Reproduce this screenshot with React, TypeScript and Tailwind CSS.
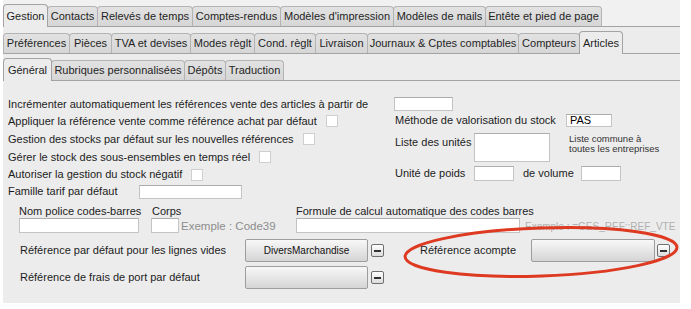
import React from 'react'

type Tab = { label: string; w: number; active?: boolean }

const row1: Tab[] = [
  { label: 'Gestion', w: 45, active: true },
  { label: 'Contacts', w: 51 },
  { label: 'Relevés de temps', w: 96 },
  { label: 'Comptes-rendus', w: 89 },
  { label: "Modèles d'impression", w: 114 },
  { label: 'Modèles de mails', w: 93 },
  { label: 'Entête et pied de page', w: 117 },
]

const row2: Tab[] = [
  { label: 'Préférences', w: 67 },
  { label: 'Pièces', w: 43 },
  { label: 'TVA et devises', w: 80 },
  { label: 'Modes règlt', w: 65 },
  { label: 'Cond. règlt', w: 62 },
  { label: 'Livraison', w: 53 },
  { label: 'Journaux & Cptes comptables', w: 152 },
  { label: 'Compteurs', w: 62 },
  { label: 'Articles', w: 44, active: true },
]

const row3: Tab[] = [
  { label: 'Général', w: 49, active: true },
  { label: 'Rubriques personnalisées', w: 134 },
  { label: 'Dépôts', w: 42 },
  { label: 'Traduction', w: 59 },
]

function TabRow({ tabs, className = '' }: { tabs: Tab[]; className?: string }) {
  return (
    <div className={`flex items-end h-[22px] border-b border-[#a3a3a3] ${className}`}>
      {tabs.map((t, i) => (
        <div
          key={t.label}
          style={{ width: t.w }}
          className={
            t.active
              ? `relative z-10 -mb-px h-[23px] flex items-center justify-center rounded-t-[4px] border border-b-0 border-[#a3a3a3] bg-[#ececec] ${i > 0 ? '-ml-px' : ''}`
              : `h-[20px] flex items-center justify-center rounded-t-[4px] border border-b-0 border-[#b3b3b3] bg-gradient-to-b from-[#e2e2e2] to-[#d6d6d6] ${i > 0 ? '-ml-px' : ''}`
          }
        >
          <span className="whitespace-nowrap text-[#1f1f1f]">{t.label}</span>
        </div>
      ))}
    </div>
  )
}

function Field({ w, h = 14, value }: { w: number; h?: number; value?: string }) {
  return (
    <div
      style={{ width: w, height: h }}
      className="shrink-0 bg-white border border-[#c4c4c4] border-t-[#adadad] px-[3px] flex items-center text-[11px] text-black"
    >
      {value}
    </div>
  )
}

function Check() {
  return <div className="shrink-0 ml-[9px] w-[12px] h-[12px] bg-white border border-[#cfcfcf]" />
}

function Minus() {
  return (
    <div className="shrink-0 w-[13px] h-[13px] rounded-[2px] border border-[#6f6f6f] bg-gradient-to-b from-white to-[#dcdcdc] flex items-center justify-center">
      <div className="w-[7px] h-[2px] bg-[#333]" />
    </div>
  )
}

function RefButton({ w, label }: { w: number; label?: string }) {
  return (
    <div
      style={{ width: w }}
      className="shrink-0 h-[23px] rounded-[2px] border border-[#9d9d9d] bg-gradient-to-b from-[#f8f8f8] to-[#d5d5d5] flex items-center justify-center text-[10px] text-[#111]"
    >
      {label}
    </div>
  )
}

export default function App() {
  return (
    <div className="relative w-[691px] h-[309px] bg-white overflow-hidden font-[Liberation_Sans,Arial,sans-serif] text-[11px] text-[#1c1c1c]">
      <div className="ml-[3px] w-[677px] bg-[#ececec] pt-[5px]">
        <TabRow tabs={row1} className="bg-[#f1f1f1] -mt-[5px] pt-[5px] h-[27px]" />
        <TabRow tabs={row2} className="mt-[5px]" />
        <TabRow tabs={row3} className="mt-[5px]" />

        <div className="h-[222px] pl-[5px] pt-[16px]">
          {/* auto increment */}
          <div className="flex items-center h-[14px]">
            <span className="w-[386px] whitespace-nowrap">
              Incrémenter automatiquement les références vente des articles à partir de
            </span>
            <Field w={59} />
          </div>

          <div className="flex">
            {/* left column */}
            <div className="w-[387px] pt-[1px]">
              <div className="flex items-center h-[18px]">
                <span>Appliquer la référence vente comme référence achat par défaut</span>
                <Check />
              </div>
              <div className="flex items-center h-[18px]">
                <span>Gestion des stocks par défaut sur les nouvelles références</span>
                <Check />
              </div>
              <div className="flex items-center h-[18px]">
                <span>Gérer le stock des sous-ensembles en temps réel</span>
                <Check />
              </div>
              <div className="flex items-center h-[17px]">
                <span>Autoriser la gestion du stock négatif</span>
                <Check />
              </div>
              <div className="flex items-center h-[17px]">
                <span className="w-[131px]">Famille tarif par défaut</span>
                <Field w={103} />
              </div>
            </div>

            {/* right column */}
            <div className="pt-[3px]">
              <div className="flex items-center h-[13px]">
                <span className="w-[171px]">Méthode de valorisation du stock</span>
                <Field w={46} h={13} value="PAS" />
              </div>
              <div className="flex items-start mt-[6px] h-[29px]">
                <span className="w-[79px] mt-[1px]">Liste des unités</span>
                <Field w={76} h={29} />
                <div className="ml-[19px] mt-[1px] text-[9.5px] leading-[10px] text-[#333]">
                  Liste commune à
                  <br />
                  toutes les entreprises
                </div>
              </div>
              <div className="flex items-center mt-[4px] h-[15px]">
                <span className="w-[79px]">Unité de poids</span>
                <Field w={40} h={15} />
                <span className="ml-[9px] w-[58px]">de volume</span>
                <Field w={40} h={15} />
              </div>
            </div>
          </div>

          {/* barcode */}
          <div className="flex ml-[11px] mt-[4px]">
            <div className="w-[132px]">
              <div className="h-[14px] leading-[14px]">Nom police codes-barres</div>
              <Field w={120} h={15} />
            </div>
            <div className="w-[145px]">
              <div className="h-[14px] leading-[14px] ml-[1px]">Corps</div>
              <div className="flex items-end">
                <Field w={28} h={15} />
                <span className="ml-[2px] text-[11.5px] leading-[13px] text-[#8c8c8c]">Exemple : Code39</span>
              </div>
            </div>
            <div>
              <div className="h-[14px] leading-[14px]">Formule de calcul automatique des codes barres</div>
              <div className="flex items-start">
                <Field w={224} h={15} />
                <div className="ml-[5px] mt-[3px] text-[10px] leading-[11px] text-[#b0b0b0] whitespace-nowrap">
                  Exemple : =GES_REF::REF_VTE
                </div>
              </div>
            </div>
          </div>

          {/* reference rows */}
          <div className="flex items-center ml-[12px] mt-[6px] h-[23px]">
            <span className="w-[225px]">Référence par défaut pour les lignes vides</span>
            <RefButton w={123} label="DiversMarchandise" />
            <div className="ml-[3px]">
              <Minus />
            </div>
            <span className="ml-[36px] w-[111px]">Référence acompte</span>
            <RefButton w={124} />
            <div className="ml-[2px]">
              <Minus />
            </div>
          </div>
          <div className="flex items-center ml-[12px] mt-[4px] h-[23px]">
            <span className="w-[225px]">Référence de frais de port par défaut</span>
            <RefButton w={123} />
            <div className="ml-[3px]">
              <Minus />
            </div>
          </div>
        </div>
      </div>

      {/* red annotation ellipse */}
      <svg className="absolute left-[400px] top-[222px]" width="285" height="60" viewBox="0 0 285 60">
        <ellipse
          cx="141"
          cy="30"
          rx="136"
          ry="24"
          transform="rotate(-2 141 30)"
          fill="none"
          stroke="#de3a22"
          strokeWidth="3"
        />
      </svg>
    </div>
  )
}
